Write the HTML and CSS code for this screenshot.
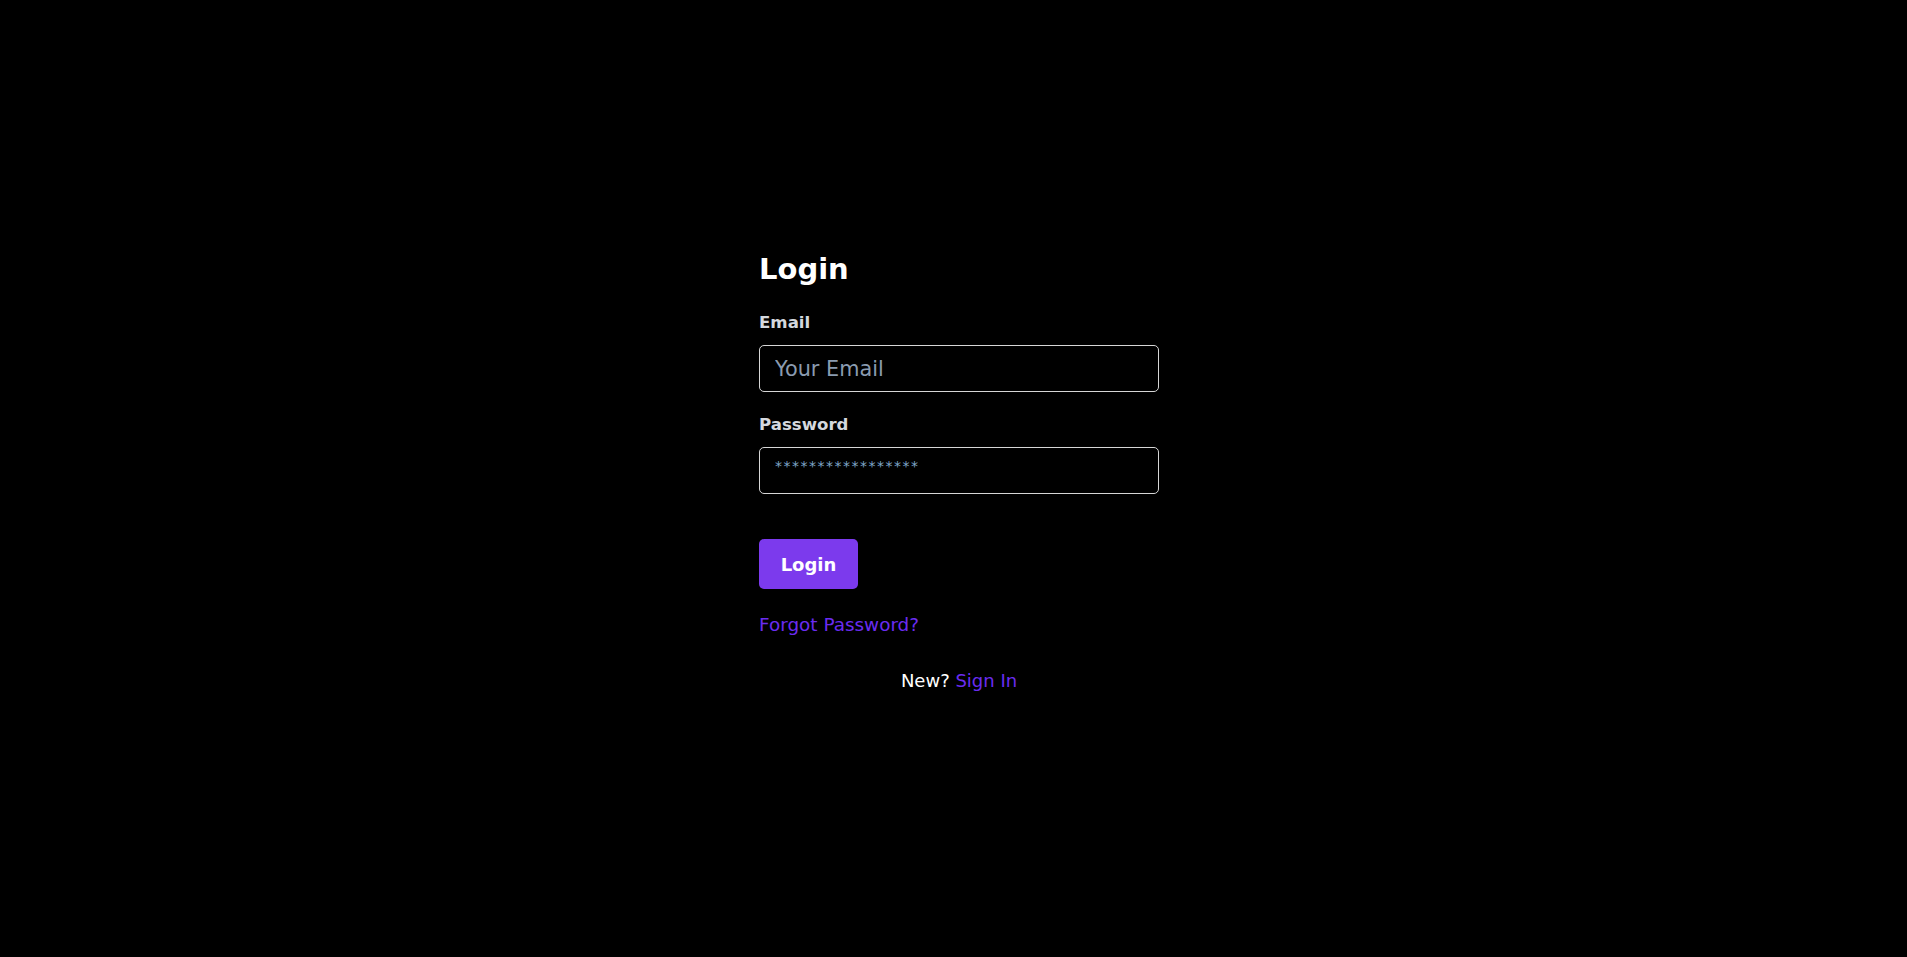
FILE: index.html
```html
<!DOCTYPE html>
<html lang="en">
<head>
<meta charset="utf-8">
<title>Login</title>
<link rel="stylesheet" href="styles.css">
</head>
<body>
<main class="page">
  <form class="login">
    <h1 class="title">Login</h1>
    <label class="label" for="email">Email</label>
    <input class="field" id="email" type="email" placeholder="Your Email">
    <label class="label label-pw" for="pw">Password</label>
    <input class="field field-pw" id="pw" type="text" value="*****************">
    <button class="btn" type="button">Login</button>
    <a class="link forgot" href="#">Forgot Password?</a>
    <p class="signup">New? <a class="link" href="#">Sign In</a></p>
  </form>
</main>
</body>
</html>
```

FILE: styles.css
```css
html, body {
  margin: 0;
  background: #000;
}
body {
  font-family: "DejaVu Sans", "Noto Sans", sans-serif;
  color: #fff;
}
.page {
  display: flex;
  justify-content: center;
  padding-top: 248px;
}
.login {
  width: 400px;
  padding-left: 11px;
  display: flex;
  flex-direction: column;
}
.title {
  margin: 0;
  font-size: 29px;
  line-height: 42px;
  font-weight: 700;
  color: #fff;
}
.label {
  margin-top: 21px;
  font-size: 16.6px;
  line-height: 24px;
  font-weight: 700;
  color: #d4d8de;
}
.label-pw {
  margin-top: 21px;
}
.field {
  box-sizing: border-box;
  margin-top: 10px;
  height: 47px;
  width: 400px;
  background: #000;
  border: 1px solid #d6d6d6;
  border-radius: 5px;
  padding: 0 15px;
  font-family: inherit;
  font-size: 20.8px;
  color: #8fa3b8;
  outline: none;
}
.field::placeholder {
  color: #8a9bb0;
}
.field-pw {
  font-size: 14px;
  padding-bottom: 9px;
  color: #7fa7c9;
  letter-spacing: 1.5px;
}
.btn {
  align-self: flex-start;
  margin-top: 45px;
  width: 99px;
  height: 50px;
  border: 0;
  border-radius: 5px;
  background: #7c3aed;
  color: #fff;
  font-family: inherit;
  font-size: 18px;
  font-weight: 700;
  cursor: pointer;
}
.link {
  color: #6a2cf0;
  text-decoration: none;
}
.forgot {
  margin-top: 23px;
  font-size: 18.4px;
  line-height: 26px;
  align-self: flex-start;
}
.signup {
  margin: 30px 0 0;
  text-align: center;
  font-size: 18px;
  line-height: 26px;
  color: #fff;
}
```
